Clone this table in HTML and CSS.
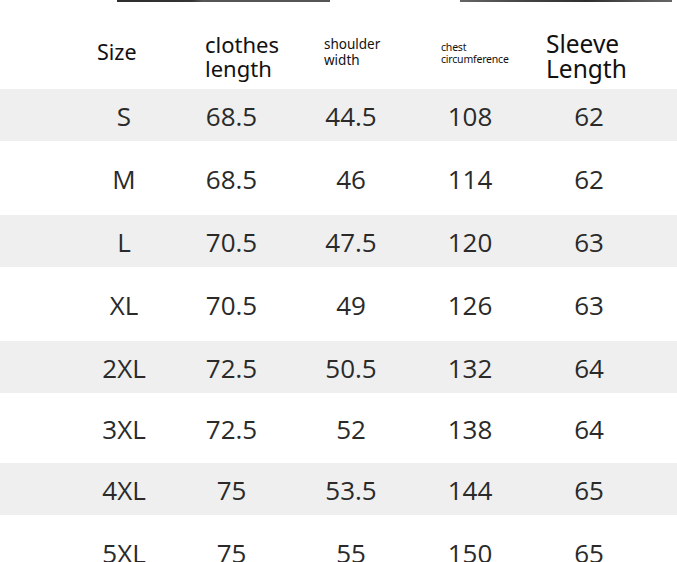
FILE: index.html
```html
<!DOCTYPE html>
<html>
<head>
<meta charset="utf-8">
<link rel="stylesheet" href="styles.css">
</head>
<body>
<div class="page">
  <div class="topbars">
    <div class="bar bar-left"></div>
    <div class="bar bar-right"></div>
  </div>
  <div class="head">
    <div class="h h-size">Size</div>
    <div class="h h-len">clothes<br>length</div>
    <div class="h h-sh">shoulder<br>width</div>
    <div class="h h-chest">chest<br>circumference</div>
    <div class="h h-sl">Sleeve<br>Length</div>
  </div>
  <div class="rows">
    <div class="row grey"><span>S</span><span>68.5</span><span>44.5</span><span>108</span><span>62</span></div>
    <div class="row white"><span>M</span><span>68.5</span><span>46</span><span>114</span><span>62</span></div>
    <div class="row grey"><span>L</span><span>70.5</span><span>47.5</span><span>120</span><span>63</span></div>
    <div class="row white"><span>XL</span><span>70.5</span><span>49</span><span>126</span><span>63</span></div>
    <div class="row grey"><span>2XL</span><span>72.5</span><span>50.5</span><span>132</span><span>64</span></div>
    <div class="row white short"><span>3XL</span><span>72.5</span><span>52</span><span>138</span><span>64</span></div>
    <div class="row grey"><span>4XL</span><span>75</span><span>53.5</span><span>144</span><span>65</span></div>
    <div class="row white"><span>5XL</span><span>75</span><span>55</span><span>150</span><span>65</span></div>
  </div>
</div>
</body>
</html>
```
FILE: styles.css
```css
html, body {
  margin: 0;
  padding: 0;
  background: #ffffff;
}
.page {
  width: 677px;
  height: 562px;
  overflow: hidden;
  font-family: "Noto Sans", "Open Sans", sans-serif;
  color: #111;
}
.topbars {
  display: flex;
  height: 2px;
}
.bar {
  height: 1.5px;
}
.bar-left {
  margin-left: 117px;
  width: 213px;
  background: linear-gradient(to right, #2e2e2e 0%, #333 35%, #555 40%, #555 100%);
}
.bar-right {
  margin-left: 130px;
  width: 212px;
  background: linear-gradient(to right, #666 0%, #444 30%, #2e2e2e 60%, #555 85%, #666 100%);
}
.head {
  display: grid;
  grid-template-columns: 108px 119px 117px 105px 120px;
  padding-left: 97px;
  height: 87px;
  align-items: center;
  box-sizing: border-box;
  padding-top: 12px;
}
.h {
  color: #111;
  white-space: nowrap;
}
.h-size {
  font-size: 21.5px;
  line-height: 26px;
}
.h-len {
  font-size: 22px;
  line-height: 24px;
  margin-top: 8px;
}
.h-sh {
  font-size: 13.5px;
  line-height: 16px;
}
.h-chest {
  font-size: 10.5px;
  line-height: 12px;
  letter-spacing: -0.2px;
  margin-top: 2px;
}
.h-sl {
  font-size: 24.5px;
  line-height: 25px;
  margin-top: 8px;
}
.rows {
  display: flex;
  flex-direction: column;
}
.row {
  display: grid;
  grid-template-columns: 100px 115px 124px 114px 124px;
  padding-left: 74px;
  box-sizing: border-box;
  font-family: "Open Sans", "Noto Sans", sans-serif;
  font-size: 26px;
  font-weight: 400;
  color: #2a2a2a;
  align-items: center;
}
.row span {
  text-align: center;
}
.grey {
  background: #efefef;
  height: 52px;
  padding-top: 2px;
}
.white {
  background: #ffffff;
  height: 74px;
  padding-top: 2px;
}
.white.short {
  height: 70px;
}
```
